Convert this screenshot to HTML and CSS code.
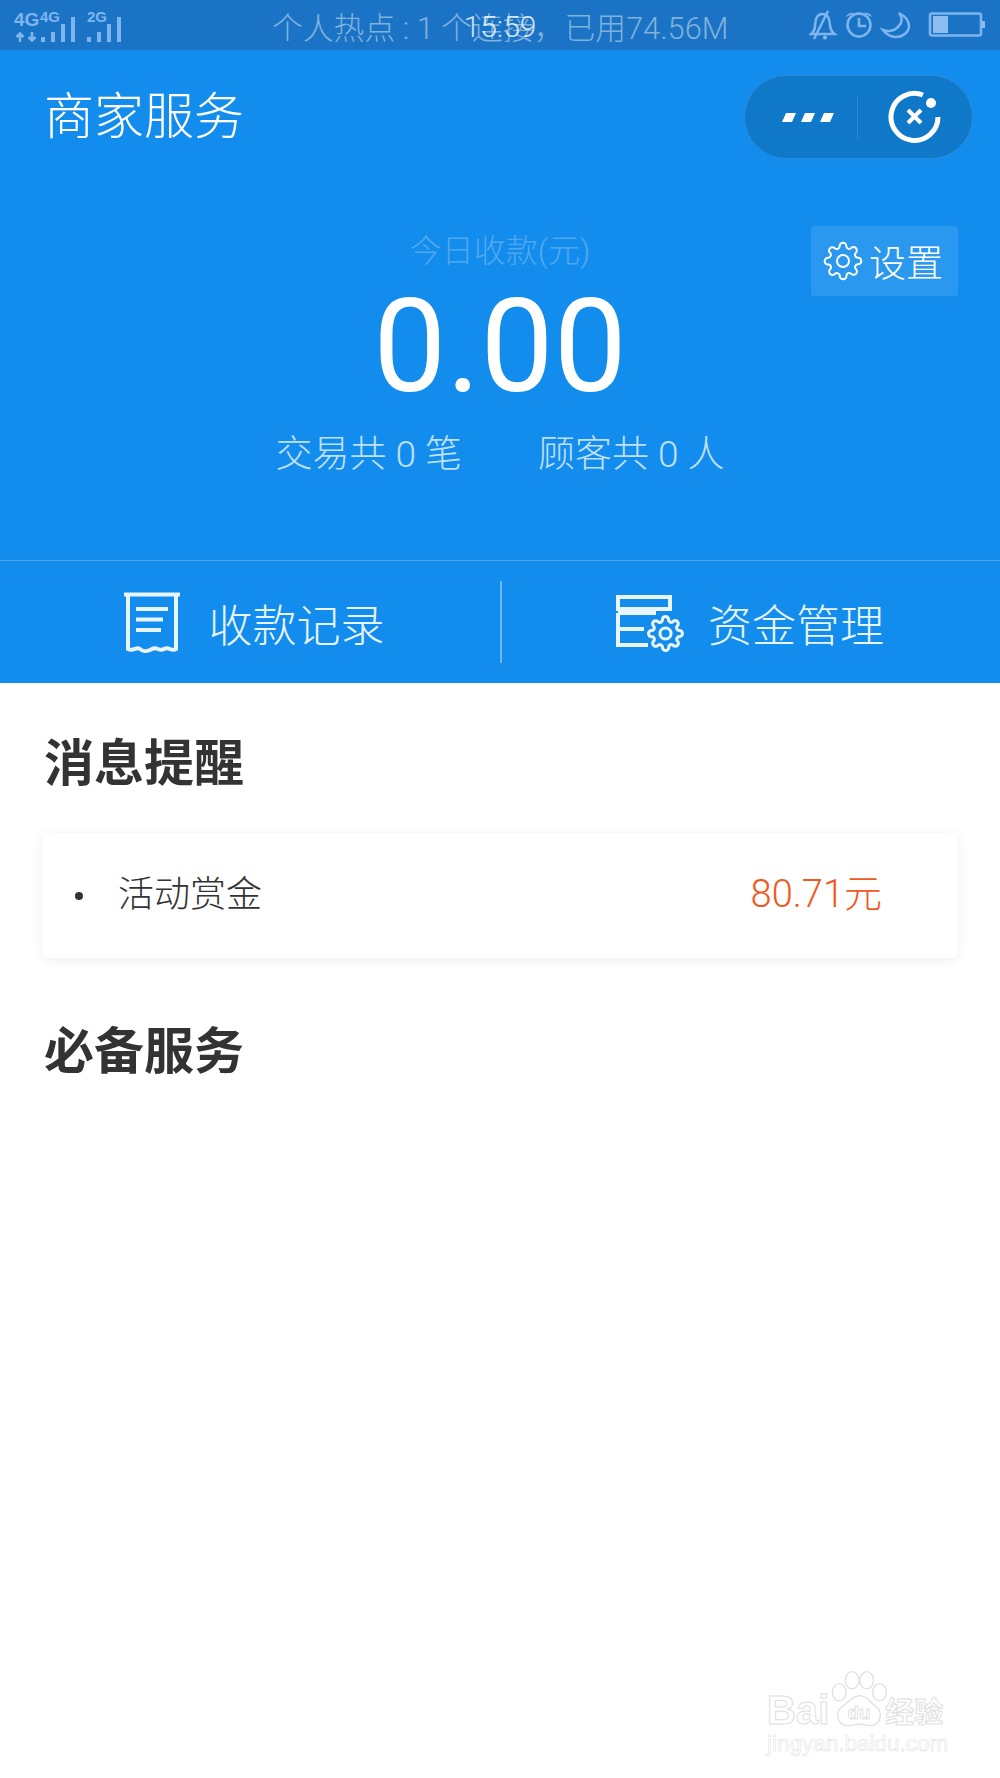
FILE: index.html
```html
<!DOCTYPE html>
<html lang="zh-CN">
<head>
    <meta charset="UTF-8">
    <meta name="viewport" content="width=device-width, initial-scale=1.0">
    <title>商家服务</title>
    <link rel="stylesheet" href="styles.css">
</head>
<body>

<svg class="defs" width="0" height="0">
    <symbol id="gear" viewBox="0 0 24 24">
        <circle cx="12" cy="12" r="3.6"/>
        <path d="M19.4 15a1.65 1.65 0 0 0 .33 1.82l.06.06a2 2 0 0 1 0 2.83 2 2 0 0 1-2.83 0l-.06-.06a1.65 1.65 0 0 0-1.82-.33 1.65 1.65 0 0 0-1 1.51V21a2 2 0 0 1-2 2 2 2 0 0 1-2-2v-.09A1.65 1.65 0 0 0 9 19.4a1.65 1.65 0 0 0-1.82.33l-.06.06a2 2 0 0 1-2.83 0 2 2 0 0 1 0-2.83l.06-.06a1.65 1.65 0 0 0 .33-1.82 1.65 1.65 0 0 0-1.51-1H3a2 2 0 0 1-2-2 2 2 0 0 1 2-2h.09A1.65 1.65 0 0 0 4.6 9a1.65 1.65 0 0 0-.33-1.82l-.06-.06a2 2 0 0 1 0-2.83 2 2 0 0 1 2.83 0l.06.06a1.65 1.65 0 0 0 1.82.33H9a1.65 1.65 0 0 0 1-1.51V3a2 2 0 0 1 2-2 2 2 0 0 1 2 2v.09a1.65 1.65 0 0 0 1 1.51 1.65 1.65 0 0 0 1.82-.33l.06-.06a2 2 0 0 1 2.83 0 2 2 0 0 1 0 2.83l-.06.06a1.65 1.65 0 0 0-.33 1.82V9a1.65 1.65 0 0 0 1.51 1H21a2 2 0 0 1 2 2 2 2 0 0 1-2 2h-.09a1.65 1.65 0 0 0-1.51 1z"/>
    </symbol>
</svg>

<div class="status-bar">
    <svg class="signal" width="112" height="40" viewBox="0 0 112 40">
        <text x="1" y="21" class="sig-big">4G</text>
        <text x="27" y="17" class="sig-small">4G</text>
        <text x="74" y="17" class="sig-small">2G</text>
        <path class="sig-arrows" d="M7 37v-8M3.500 32l3.500-3.500 3.500 3.500M19 27v8M15.500 32l3.500 3.500 3.500-3.500"/>
        <rect x="28" y="32" width="4" height="5"/><rect x="38" y="27" width="4" height="10"/>
        <rect x="48" y="19" width="4" height="18"/><rect x="58" y="12" width="4" height="25"/>
        <rect x="74" y="32" width="4" height="5"/><rect x="84" y="27" width="4" height="10"/>
        <rect x="94" y="19" width="4" height="18"/><rect x="104" y="12" width="4" height="25"/>
    </svg>
    <div class="hotspot">个人热点 : 1 个连接，已用74.56M</div>
    <div class="clock">15:59</div>
    <svg class="status-icons" width="176" height="30" viewBox="0 0 176 30">
        <g class="status-line">
            <path d="M2 24c4-3 4-7 4.500-12 .5-5 3-8 7-8s6.500 3 7 8c.5 5 1 9 5 12z"/>
            <path d="M19 1 5 29"/>
            <circle cx="50" cy="15" r="11.500"/>
            <path d="M50 8v8h7"/>
            <path d="M90 3c6 3 10 8 10 13 0 6-6 11-13 11-6 0-10-3-13-7 5 2 11 1 15-3 4-4 5-9 1-14z"/>
            <rect x="121" y="3.500" width="51" height="22" rx="2"/>
        </g>
        <path class="battery-fill" d="M37 7c1-3 5-5 8-4zM63 7c-1-3-5-5-8-4z"/>
        <circle class="battery-fill" cx="16" cy="27.500" r="2"/>
        <rect class="battery-fill" x="124" y="6" width="15" height="17"/>
        <rect class="battery-fill" x="173" y="11" width="3" height="7"/>
    </svg>
</div>

<div class="hero">
    <div class="nav">
        <div class="nav-title">商家服务</div>
        <div class="capsule">
            <svg width="52" height="9" viewBox="0 0 52 9">
                <path d="M4 0h10l-4 9H0zM23 0h10l-4 9H19zM42 0h10l-4 9H38z"/>
            </svg>
            <span class="capsule-line"></span>
            <svg class="capsule-close" width="54" height="54" viewBox="0 0 54 54">
                <path class="close-ring" d="M35 5A23.500 23.500 0 1 0 50 27"/>
                <path class="close-x" d="M20 20 33 33M33 20 20 33"/>
                <circle cx="43" cy="13" r="5"/>
            </svg>
        </div>
    </div>

    <div class="summary">
        <div class="summary-main">
            <div class="today-label">今日收款(元)</div>
            <div class="today-amount">0.00</div>
        </div>
        <div class="settings-btn">
            <svg class="gear" width="40" height="40"><use href="#gear"/></svg>
            <span>设置</span>
        </div>
    </div>

    <div class="stats">
        <span>交易共 0 笔</span>
        <span>顾客共 0 人</span>
    </div>

    <div class="actions">
        <div class="action action-left">
            <svg class="action-icon" width="56" height="61" viewBox="0 0 56 61">
                <path d="M0 2.500h56M4 2.500V57c6 3 8-3 12 0s7 3 12 0 7 3 12 0 7 3 12 0V2.500M12 17h32M12 27.500h27M12 38h25"/>
            </svg>
            <span class="action-text">收款记录</span>
        </div>
        <div class="action action-right">
            <svg class="action-icon" width="68" height="58" viewBox="0 0 68 58">
                <path d="M2 3h52v12H2zM2 19v32h30M2 19h38M2 35h26"/>
                <use class="action-gear" href="#gear" x="31" y="21" width="37" height="37"/>
            </svg>
            <span class="action-text">资金管理</span>
        </div>
    </div>
</div>

<div class="content">
    <h2 class="section-title">消息提醒</h2>
    <div class="message-card">
        <span class="dot"></span>
        <span class="message-name">活动赏金</span>
        <span class="message-money">80.71元</span>
    </div>
    <h2 class="section-title second">必备服务</h2>
</div>

<div class="watermark">
    <div class="wm-logo">
        <span>Bai</span>
        <svg width="60" height="60" viewBox="0 0 70 66">
            <ellipse cx="12" cy="24" rx="8" ry="10"/>
            <ellipse cx="27" cy="10" rx="8" ry="10"/>
            <ellipse cx="44" cy="10" rx="8" ry="10"/>
            <ellipse cx="59" cy="24" rx="8" ry="10"/>
            <path d="M36 28c8 0 12 8 19 13 8 6 6 22-7 22-5 0-8-2-13-2s-8 2-13 2c-13 0-15-16-7-22 7-5 13-13 21-13z"/>
            <text x="35" y="55" class="wm-du">du</text>
        </svg>
        <span class="wm-cn">经验</span>
    </div>
    <div class="wm-url">jingyan.baidu.com</div>
</div>

</body>
</html>
```

FILE: styles.css
```css
* {
    box-sizing: border-box;
}

html, body {
    margin: 0;
    height: 100%;
}

body {
    position: relative;
    min-height: 1778px;
    background-color: #fff;
    font-family: Roboto, "Noto Sans CJK SC", sans-serif;
    color: #333;
    overflow: hidden;
}

.defs {
    position: absolute;
}

/* status bar */
.status-bar {
    position: relative;
    display: flex;
    align-items: center;
    height: 50px;
    padding: 0 15px 0 13px;
    background-color: #1a73c4;
}

.signal {
    fill: #7fb5ef;
    flex: none;
    font-family: "Liberation Sans", sans-serif;
}

.sig-big {
    font-size: 19px;
    font-weight: 700;
}

.sig-small {
    font-size: 15px;
    font-weight: 700;
}

.sig-arrows {
    fill: none;
    stroke: #7fb5ef;
    stroke-width: 2.500;
}

.hotspot {
    margin-left: 147px;
    width: 460px;
    font-size: 30.800px;
    font-weight: 300;
    white-space: nowrap;
    color: #80b2dc;
}

.clock {
    position: absolute;
    left: 0;
    right: 0;
    top: 9px;
    text-align: center;
    font-size: 30px;
    font-weight: 300;
    color: rgba(255, 255, 255, 0.8);
}

.status-icons {
    flex: none;
    margin-left: auto;
}

.status-line {
    fill: none;
    stroke: #7fb5ef;
    stroke-width: 2.500;
}

.battery-fill {
    fill: #8dbcf0;
}

/* blue header */
.hero {
    height: 633px;
    background-color: #128ced;
}

.nav {
    display: flex;
    align-items: center;
    justify-content: space-between;
    padding: 25px 27px 0 44px;
}

.nav-title {
    font-size: 50px;
    font-weight: 300;
    line-height: 81px;
    color: #fff;
}

.capsule {
    display: flex;
    align-items: center;
    width: 229px;
    height: 84px;
    padding-left: 37px;
    background-color: #1078c8;
    border: 1px solid #2a8bd6;
    border-radius: 42px;
    fill: #fff;
}

.capsule-line {
    width: 1px;
    height: 44px;
    margin: 0 30px 0 23px;
    background-color: #2b89d2;
}

.close-ring, .close-x {
    fill: none;
    stroke: #fff;
    stroke-width: 5;
}

.close-x {
    stroke-width: 4;
}

.summary {
    display: grid;
    grid-template-columns: 1fr auto 1fr;
    padding-top: 67px;
}

.summary-main {
    grid-column: 2;
    text-align: center;
}

.today-label {
    font-size: 32px;
    font-weight: 300;
    line-height: 50px;
    color: #52a8ef;
}

.today-amount {
    margin-top: 6px;
    font-size: 130px;
    line-height: 130px;
    color: #fff;
}

.settings-btn {
    grid-column: 3;
    justify-self: end;
    align-self: start;
    display: flex;
    align-items: center;
    width: 147px;
    height: 70px;
    margin-right: 42px;
    padding-left: 12px;
    background-color: #2a98ee;
    border-radius: 3px;
    font-size: 37px;
    font-weight: 300;
    color: #fff;
}

.gear {
    fill: none;
    stroke: #fff;
    stroke-width: 1.200;
    margin-right: 6px;
}

.stats {
    display: flex;
    justify-content: center;
    gap: 76px;
    margin-top: 18px;
    font-size: 37px;
    font-weight: 300;
    line-height: 50px;
    color: #c0e0fa;
}

.actions {
    display: flex;
    height: 124px;
    margin-top: 80px;
    border-top: 1px solid #4aa8f1;
}

.action {
    flex: none;
    width: 50%;
    display: flex;
    align-items: center;
    justify-content: center;
    gap: 29px;
}

.action-left {
    padding-left: 8px;
}

.action-right {
    gap: 24px;
    position: relative;
}

.action-right::before {
    content: "";
    position: absolute;
    left: 0;
    top: 20px;
    width: 2px;
    height: 82px;
    background-color: #6db8f3;
}

.action-icon {
    fill: none;
    stroke: #e8f4fe;
    stroke-width: 4;
}

.action-gear {
    stroke-width: 2;
}

.action-text {
    font-size: 44px;
    color: #e8f4fe;
    font-weight: 300;
}

/* white part */
.content {
    padding: 46px 42px 0;
}

.section-title {
    margin: 0;
    padding-left: 2px;
    font-size: 50px;
    font-weight: 700;
    line-height: 70px;
    color: #333;
}

.section-title.second {
    margin-top: 59px;
}

.message-card {
    display: flex;
    align-items: center;
    height: 125px;
    margin-top: 34px;
    padding: 0 76px 10px 33px;
    background-color: #fff;
    border-radius: 6px;
    box-shadow: 0 2px 12px rgba(0, 0, 0, 0.07);
}

.dot {
    width: 8px;
    height: 8px;
    margin: 10px 35px 0 0;
    background-color: #333;
    border-radius: 50%;
}

.message-name {
    font-size: 36px;
    font-weight: 300;
    color: #333;
}

.message-money {
    margin-left: auto;
    font-size: 38px;
    font-weight: 300;
    color: #f05a22;
}

/* watermark sits over the page */
.watermark {
    position: absolute;
    left: 767px;
    top: 1670px;
    width: 190px;
    color: #fff;
    font-family: "Liberation Sans", "Noto Sans CJK SC", sans-serif;
    -webkit-text-stroke: 1px #e0e0e0;
}

.wm-logo {
    display: flex;
    align-items: flex-end;
    height: 60px;
    font-size: 40px;
    font-weight: 700;
    line-height: 40px;
}

.wm-logo svg {
    flex: none;
    margin-right: -4px;
    fill: #fff;
    stroke: #e0e0e0;
    stroke-width: 1.500;
}

.wm-du {
    font-size: 22px;
    text-anchor: middle;
    stroke-width: 1;
}

.wm-cn {
    font-family: "Noto Sans CJK SC", sans-serif;
    font-size: 29px;
    line-height: 40px;
    white-space: nowrap;
}

.wm-url {
    margin-top: 1px;
    font-size: 22.500px;
    line-height: 26px;
    white-space: nowrap;
    -webkit-text-stroke: 0.6px #e4e4e4;
}
```
